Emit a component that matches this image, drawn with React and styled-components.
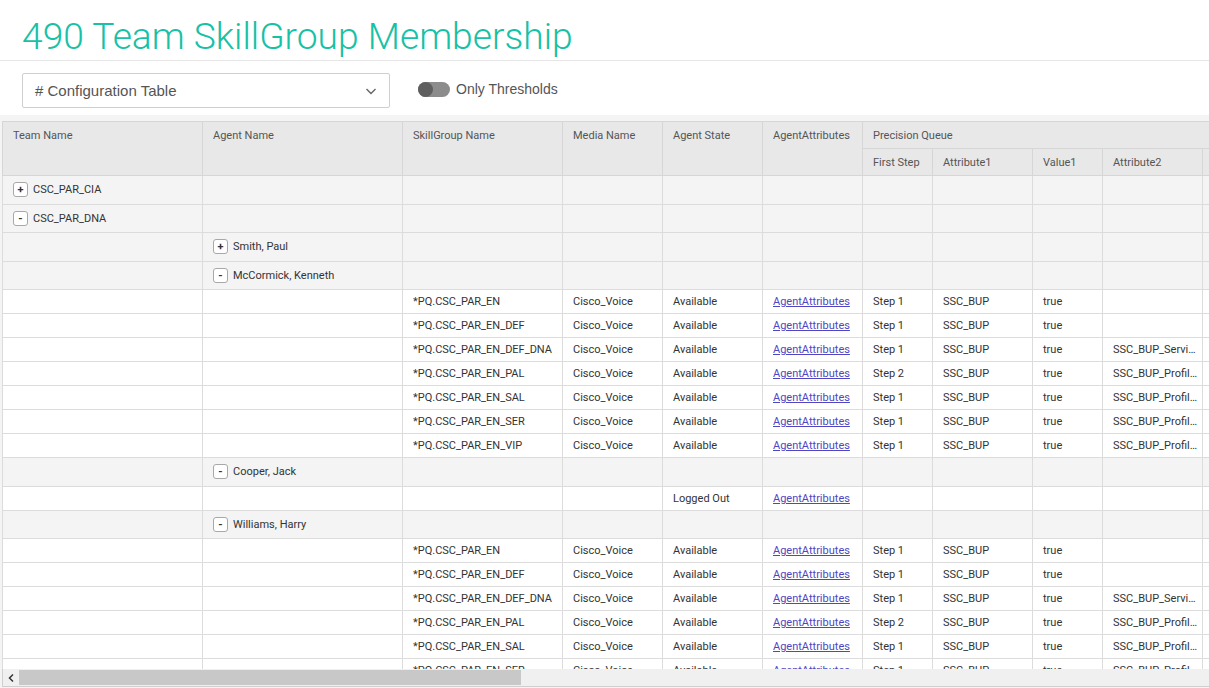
import React from "react";
import styled, { createGlobalStyle } from "styled-components";

const GlobalStyle = createGlobalStyle`
  html, body {
    margin: 0;
    padding: 0;
    background: #fff;
    overflow: hidden;
  }
  body {
    font-family: "Liberation Sans", Arial, sans-serif;
  }
`;

const skills = [
  { name: "*PQ.CSC_PAR_EN", step: "Step 1", attr2: "" },
  { name: "*PQ.CSC_PAR_EN_DEF", step: "Step 1", attr2: "" },
  { name: "*PQ.CSC_PAR_EN_DEF_DNA", step: "Step 1", attr2: "SSC_BUP_ServiceType" },
  { name: "*PQ.CSC_PAR_EN_PAL", step: "Step 2", attr2: "SSC_BUP_ProfileType" },
  { name: "*PQ.CSC_PAR_EN_SAL", step: "Step 1", attr2: "SSC_BUP_ProfileType" },
  { name: "*PQ.CSC_PAR_EN_SER", step: "Step 1", attr2: "SSC_BUP_ProfileType" },
  { name: "*PQ.CSC_PAR_EN_VIP", step: "Step 1", attr2: "SSC_BUP_ProfileType" },
];

// last column is the one scrolled off to the right
const widths = [200, 200, 160, 100, 100, 100, 70, 100, 70, 100, 100];

const rows = [
  { kind: "team", open: false, label: "CSC_PAR_CIA" },
  { kind: "team", open: true, label: "CSC_PAR_DNA" },
  { kind: "agent", open: false, label: "Smith, Paul" },
  { kind: "agent", open: true, label: "McCormick, Kenneth" },
  ...skills.map((s) => ({ kind: "skill", ...s })),
  { kind: "agent", open: true, label: "Cooper, Jack" },
  { kind: "loggedOut" },
  { kind: "agent", open: true, label: "Williams, Harry" },
  ...skills.map((s) => ({ kind: "skill", ...s })),
];

export default function App() {
  const renderRow = (row, i) => {
    if (row.kind === "team" || row.kind === "agent") {
      const content = (
        <Expander>
          <ToggleBox>{row.open ? "-" : "+"}</ToggleBox>
          {row.label}
        </Expander>
      );
      return (
        <GroupRow key={i}>
          <Cell>{row.kind === "team" ? content : null}</Cell>
          <Cell>{row.kind === "agent" ? content : null}</Cell>
          {widths.slice(2).map((_, j) => (
            <Cell key={j} />
          ))}
        </GroupRow>
      );
    }
    if (row.kind === "loggedOut") {
      return (
        <DetailRow key={i}>
          <Cell />
          <Cell />
          <Cell />
          <Cell />
          <Cell>Logged Out</Cell>
          <Cell>
            <AttrLink href="#">AgentAttributes</AttrLink>
          </Cell>
          <Cell />
          <Cell />
          <Cell />
          <Cell />
          <Cell />
        </DetailRow>
      );
    }
    return (
      <DetailRow key={i}>
        <Cell />
        <Cell />
        <Cell>{row.name}</Cell>
        <Cell>Cisco_Voice</Cell>
        <Cell>Available</Cell>
        <Cell>
          <AttrLink href="#">AgentAttributes</AttrLink>
        </Cell>
        <Cell>{row.step}</Cell>
        <Cell>SSC_BUP</Cell>
        <Cell>true</Cell>
        <Cell>{row.attr2}</Cell>
        <Cell />
      </DetailRow>
    );
  };

  return (
    <Page>
      <GlobalStyle />
      <Header>
        <Title>490 Team SkillGroup Membership</Title>
      </Header>
      <Toolbar>
        <Select>
          <span># Configuration Table</span>
          <svg width="14" height="14" viewBox="0 0 14 14">
            <path d="M2.5 5 L7 9.5 L11.5 5" fill="none" stroke="#666" strokeWidth="1.4" />
          </svg>
        </Select>
        <SwitchLabel>
          <Track>
            <Knob />
          </Track>
          Only Thresholds
        </SwitchLabel>
      </Toolbar>
      <TableArea>
        <TableScroll>
          <Grid>
            <colgroup>
              {widths.map((w, i) => (
                <col key={i} style={{ width: w }} />
              ))}
            </colgroup>
            <thead>
              <HeadRow>
                <HeadCell rowSpan={2}>Team Name</HeadCell>
                <HeadCell rowSpan={2}>Agent Name</HeadCell>
                <HeadCell rowSpan={2}>SkillGroup Name</HeadCell>
                <HeadCell rowSpan={2}>Media Name</HeadCell>
                <HeadCell rowSpan={2}>Agent State</HeadCell>
                <HeadCell rowSpan={2}>AgentAttributes</HeadCell>
                <HeadCell colSpan={5}>Precision Queue</HeadCell>
              </HeadRow>
              <HeadRow>
                <HeadCell>First Step</HeadCell>
                <HeadCell>Attribute1</HeadCell>
                <HeadCell>Value1</HeadCell>
                <HeadCell>Attribute2</HeadCell>
                <HeadCell />
              </HeadRow>
            </thead>
            <tbody>{rows.map(renderRow)}</tbody>
          </Grid>
        </TableScroll>
        <ScrollBar>
          <ArrowButton>
            <svg width="8" height="10" viewBox="0 0 8 10">
              <path d="M6 1.5 L2.5 5 L6 8.5" fill="none" stroke="#333" strokeWidth="1.5" />
            </svg>
          </ArrowButton>
          <Thumb />
        </ScrollBar>
      </TableArea>
    </Page>
  );
}

const Page = styled.div`
  width: 1209px;
  height: 688px;
  display: flex;
  flex-direction: column;
  background: #fff;
`;

const Header = styled.div`
  height: 60px;
  border-bottom: 1px solid #e6e6e6;
  padding-left: 22px;
  display: flex;
  align-items: flex-end;
`;

const Title = styled.h1`
  margin: 0 0 3px 0;
  font-family: Roboto, "Open Sans", sans-serif;
  font-weight: 300;
  font-size: 37.2px;
  line-height: 42px;
  color: #17c1a6;
`;

const Toolbar = styled.div`
  display: flex;
  align-items: center;
  gap: 28px;
  padding: 12px 22px 7px;
`;

const Select = styled.div`
  width: 368px;
  height: 35px;
  box-sizing: border-box;
  border: 1px solid #cfcfcf;
  border-radius: 2px;
  padding: 0 12px;
  display: flex;
  align-items: center;
  justify-content: space-between;
  font-size: 15px;
  color: #555;
  svg {
    margin-right: -1px;
  }
`;

const SwitchLabel = styled.div`
  display: flex;
  align-items: center;
  gap: 6px;
  font-size: 14px;
  color: #555;
  margin-top: -3px;
`;

const Track = styled.div`
  width: 32px;
  height: 15px;
  border-radius: 8px;
  background: #8c8c8c;
  display: flex;
  align-items: center;
`;

const Knob = styled.div`
  width: 15px;
  height: 15px;
  border-radius: 50%;
  background: #5f5f5f;
`;

const TableArea = styled.div`
  flex: 1;
  min-height: 0;
  background: #f4f4f4;
  padding: 6px 0 0 2px;
  display: flex;
  flex-direction: column;
`;

const TableScroll = styled.div`
  flex: 1;
  min-height: 0;
  overflow: hidden;
  background: #fff;
`;

const Grid = styled.table`
  width: 1300px;
  table-layout: fixed;
  border-collapse: collapse;
  font-family: Roboto, "Liberation Sans", sans-serif;
  font-size: 11px;
  color: #333;
`;

const HeadRow = styled.tr`
  height: 27px;
`;

const HeadCell = styled.th`
  background: #e8e8e8;
  border: 1px solid #d6d6d6;
  text-align: left;
  vertical-align: top;
  font-weight: normal;
  color: #555;
  padding: 7px 10px 0;
  white-space: nowrap;
  overflow: hidden;
`;

const Cell = styled.td`
  border: 1px solid #dcdcdc;
  padding: 0 1px 0 10px;
  white-space: nowrap;
  overflow: hidden;
  text-overflow: ellipsis;
`;

const GroupRow = styled.tr`
  height: 28.5px;
  background: #f4f4f4;
`;

const DetailRow = styled.tr`
  height: 24px;
  background: #fff;
`;

const Expander = styled.div`
  display: flex;
  align-items: center;
  gap: 5px;
`;

const ToggleBox = styled.span`
  width: 13px;
  height: 13px;
  border: 1px solid #a8a8a8;
  border-radius: 3px;
  background: #fff;
  display: inline-flex;
  align-items: center;
  justify-content: center;
  font-size: 11px;
  font-weight: bold;
  color: #333;
  line-height: 1;
`;

const AttrLink = styled.a`
  color: #4f46c2;
  text-decoration: underline;
`;

const ScrollBar = styled.div`
  height: 17px;
  background: #f0f0f0;
  border-left: 1px solid #cfcfcf;
  border-bottom: 1px solid #cfcfcf;
  display: flex;
  align-items: center;
  margin-bottom: 1px;
`;

const ArrowButton = styled.div`
  width: 16px;
  height: 17px;
  display: flex;
  align-items: center;
  justify-content: center;
`;

const Thumb = styled.div`
  width: 502px;
  height: 15px;
  background: #c8c8c8;
`;
